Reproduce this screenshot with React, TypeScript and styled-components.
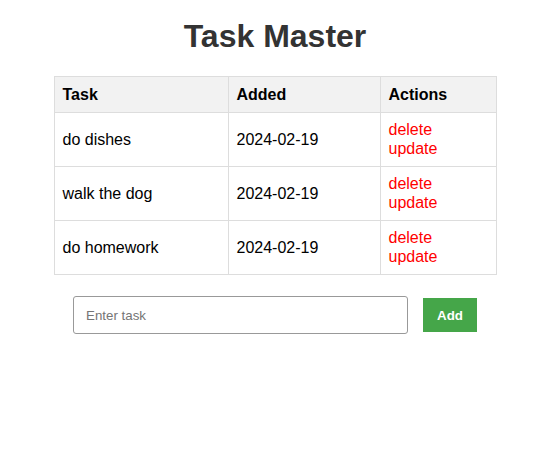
import React from "react";
import styled, { createGlobalStyle } from "styled-components";

const Global = createGlobalStyle`
  body {
    margin: 0;
    font-family: "Liberation Sans", Arial, sans-serif;
    background: #fff;
  }
`;

const Page = styled.div`
  display: flex;
  flex-direction: column;
  align-items: center;
  padding-top: 18px;
`;

const Title = styled.h1`
  margin: 0 0 21px;
  font-size: 32px;
  line-height: 37px;
  font-weight: bold;
  color: #333;
`;

const Table = styled.table`
  width: 443px;
  border-collapse: collapse;
  font-size: 16px;
  line-height: 19px;
  color: #000;
`;

const Th = styled.th`
  text-align: left;
  background: #f2f2f2;
  border: 1px solid #ddd;
  padding: 8px;
  font-weight: bold;
`;

const Td = styled.td`
  border: 1px solid #ddd;
  padding: 8px;
  vertical-align: middle;
`;

const ActionLink = styled.div`
  color: red;
  line-height: 18.5px;
  cursor: pointer;
`;

const Form = styled.form`
  display: flex;
  align-items: center;
  gap: 15px;
  margin-top: 21px;
`;

const Input = styled.input`
  width: 335px;
  height: 38px;
  box-sizing: border-box;
  padding: 0 12px;
  border: 1px solid #999;
  border-radius: 3px;
  font-family: "Liberation Sans", Arial, sans-serif;
  font-size: 13.33px;
  &::placeholder {
    color: #757575;
  }
`;

const AddButton = styled.button`
  width: 54px;
  height: 34px;
  background: #45a649;
  color: #fff;
  border: none;
  font-family: "Liberation Sans", Arial, sans-serif;
  font-size: 13.33px;
  font-weight: bold;
  cursor: pointer;
`;

const tasks = [
  { name: "do dishes", added: "2024-02-19" },
  { name: "walk the dog", added: "2024-02-19" },
  { name: "do homework", added: "2024-02-19" },
];

export default function App() {
  return (
    <>
      <Global />
      <Page>
        <Title>Task Master</Title>
        <Table>
          <colgroup>
            <col style={{ width: 174 }} />
            <col style={{ width: 152 }} />
            <col />
          </colgroup>
          <thead>
            <tr>
              <Th>Task</Th>
              <Th>Added</Th>
              <Th>Actions</Th>
            </tr>
          </thead>
          <tbody>
            {tasks.map((t) => (
              <tr key={t.name}>
                <Td>{t.name}</Td>
                <Td>{t.added}</Td>
                <Td>
                  <ActionLink>delete</ActionLink>
                  <ActionLink>update</ActionLink>
                </Td>
              </tr>
            ))}
          </tbody>
        </Table>
        <Form onSubmit={(e) => e.preventDefault()}>
          <Input placeholder="Enter task" />
          <AddButton type="submit">Add</AddButton>
        </Form>
      </Page>
    </>
  );
}
